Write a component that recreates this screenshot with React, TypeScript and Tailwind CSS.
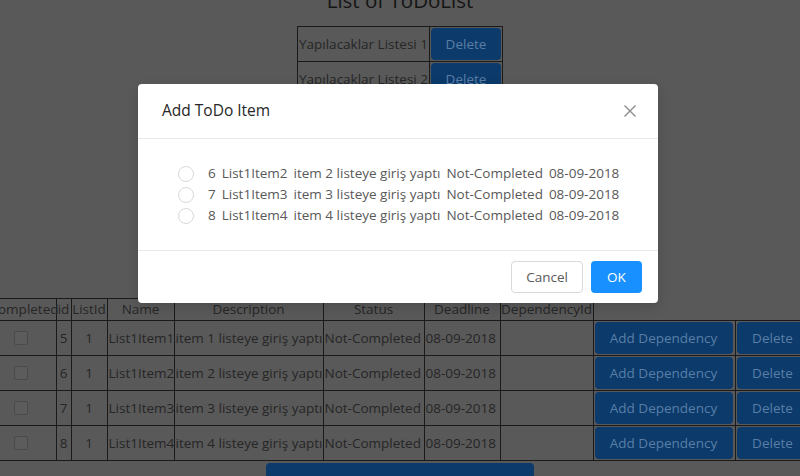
import React from 'react';

const items = [
  { id: 5, name: 'List1Item1', desc: 'item 1 listeye giriş yaptı' },
  { id: 6, name: 'List1Item2', desc: 'item 2 listeye giriş yaptı' },
  { id: 7, name: 'List1Item3', desc: 'item 3 listeye giriş yaptı' },
  { id: 8, name: 'List1Item4', desc: 'item 4 listeye giriş yaptı' },
];

const cols = [67, 15, 36, 67, 149, 101, 76, 93, 142, 76];
const heads = ['Completed', 'id', 'ListId', 'Name', 'Description', 'Status', 'Deadline', 'DependencyId'];

export default function App() {
  return (
    <div className="relative w-[800px] h-[476px] overflow-hidden bg-[#595959] text-[13.5px] text-[#262626] font-['Segoe_UI','Open_Sans',sans-serif]">
      {/* ═══ Page behind the mask ═══ */}
      <div className="flex flex-col items-center">
        <h3 className="mt-[-12px] h-[38px] text-[20.5px] leading-[24px] font-medium text-[#141414]">List of ToDoList</h3>

        <div className="h-[272px] w-full flex justify-center">
          <table className="border-collapse self-start">
            <tbody>
              {[1, 2, 3].map((n) => (
                <tr key={n}>
                  <td className="border border-[#1a1a1a] h-[35px] px-px">Yapılacaklar Listesi {n}</td>
                  <td className="border border-[#1a1a1a] h-[35px] p-px">
                    <button className="h-[32px] w-[70px] rounded-[4px] bg-[#0b3a6b] text-[#5a7ea6]">Delete</button>
                  </td>
                </tr>
              ))}
            </tbody>
          </table>
        </div>

        <div className="w-full flex justify-center">
          <table className="border-collapse table-fixed w-[822px] shrink-0">
            <colgroup>
              {cols.map((w, i) => (
                <col key={i} style={{ width: w }} />
              ))}
            </colgroup>
            <thead>
              <tr>
                {heads.map((h) => (
                  <th key={h} className="border border-[#1a1a1a] h-[22px] px-0 font-normal text-center whitespace-nowrap">
                    {h}
                  </th>
                ))}
                <th />
                <th />
              </tr>
            </thead>
            <tbody>
              {items.map((it) => (
                <tr key={it.id}>
                  <td className="border border-[#1a1a1a] h-[35px] pl-[24px]">
                    <span className="block w-[14px] h-[14px] rounded-[2px] border border-[#4a4a4a] bg-[#5c5c5c]" />
                  </td>
                  <td className="border border-[#1a1a1a] text-center">{it.id}</td>
                  <td className="border border-[#1a1a1a] text-center">1</td>
                  <td className="border border-[#1a1a1a] px-px whitespace-nowrap">{it.name}</td>
                  <td className="border border-[#1a1a1a] px-px whitespace-nowrap">{it.desc}</td>
                  <td className="border border-[#1a1a1a] px-px whitespace-nowrap">Not-Completed</td>
                  <td className="border border-[#1a1a1a] px-px whitespace-nowrap">08-09-2018</td>
                  <td className="border border-[#1a1a1a]" />
                  <td className="border border-[#1a1a1a] p-px">
                    <button className="h-[32px] w-[138px] rounded-[4px] bg-[#0b3a6b] text-[#5a7ea6]">Add Dependency</button>
                  </td>
                  <td className="border border-[#1a1a1a] p-px">
                    <button className="h-[32px] w-[72px] rounded-[4px] bg-[#0b3a6b] text-[#5a7ea6]">Delete</button>
                  </td>
                </tr>
              ))}
            </tbody>
          </table>
        </div>

        <button className="mt-[2px] h-[36px] w-[268px] rounded-[4px] bg-[#0b3a6b] text-[#5a7ea6]">
          Add ToDoItem to Yapılacaklar Listesi 1
        </button>
      </div>

      {/* ═══ Modal ═══ */}
      <div className="absolute left-[138px] top-[84px] w-[520px] rounded-[4px] bg-white shadow-[0_4px_12px_rgba(0,0,0,0.15)]">
        <div className="flex items-center justify-between h-[55px] pl-[24px] pr-[20px] border-b border-[#e8e8e8]">
          <span className="text-[15.5px] font-medium text-[#262626]">Add ToDo Item</span>
          <svg width="16" height="16" viewBox="0 0 16 16" className="text-[#8c8c8c]">
            <path d="M2.5 2.5 L13.5 13.5 M13.5 2.5 L2.5 13.5" stroke="currentColor" strokeWidth="1.4" />
          </svg>
        </div>

        <div className="pt-[24px] pb-[24px] pl-[40px] text-[#595959]">
          {items.slice(1).map((it) => (
            <label key={it.id} className="flex items-center h-[21px] whitespace-nowrap">
              <span className="w-[16px] h-[16px] rounded-full border border-[#d9d9d9] bg-white" />
              <span className="ml-[14px] flex gap-[6px]">
                <span>{it.id}</span>
                <span>{it.name}</span>
                <span>{it.desc}</span>
                <span>Not-Completed</span>
                <span>08-09-2018</span>
              </span>
            </label>
          ))}
        </div>

        <div className="flex justify-end gap-[8px] px-[16px] py-[10px] border-t border-[#e8e8e8]">
          <button className="h-[32px] w-[72px] rounded-[4px] border border-[#d9d9d9] bg-white text-[#595959]">Cancel</button>
          <button className="h-[32px] w-[51px] rounded-[4px] bg-[#1890ff] text-white">OK</button>
        </div>
      </div>
    </div>
  );
}
